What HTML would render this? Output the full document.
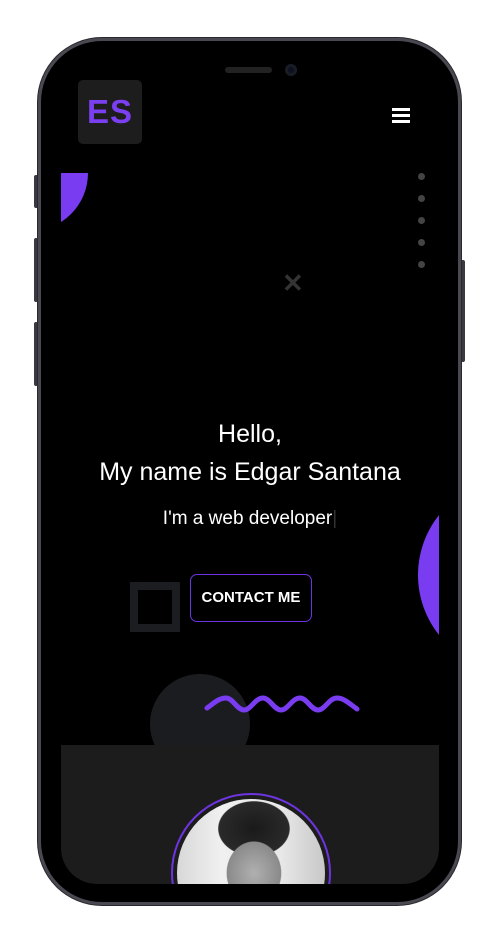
<!DOCTYPE html>
<html><head><meta charset="utf-8"><style>
*{margin:0;padding:0;box-sizing:border-box}
html,body{width:499px;height:944px;background:#fff;overflow:hidden;font-family:"Liberation Sans",sans-serif}
.abs{position:absolute}
.phone{left:38px;top:38px;width:423px;height:867px;border-radius:64px;background:#000;border:3px solid #4a4850;box-shadow:0 0 0 1px #2a282e}
.btn{background:#3a3840;border-radius:2px}
.screen{left:61px;top:58px;width:378px;height:826px;border-radius:36px;overflow:hidden;background:#000}
.t{color:#fff;text-align:center;width:100%;left:0}
</style></head><body>
<div class="abs btn" style="left:34px;top:175px;width:5px;height:33px"></div>
<div class="abs btn" style="left:34px;top:238px;width:5px;height:64px"></div>
<div class="abs btn" style="left:34px;top:322px;width:5px;height:64px"></div>
<div class="abs btn" style="left:460px;top:260px;width:5px;height:102px"></div>
<div class="abs phone"></div>
<div class="abs screen">
  <div class="abs" style="left:-89px;top:57px;width:116px;height:116px;border-radius:50%;background:#7a3cf0;clip-path:inset(58px 0 0 0)"></div>
  <div class="abs" style="left:0;top:687px;width:378px;height:139px;background:#1c1c1c"></div>
  <div class="abs" style="left:17px;top:22px;width:64px;height:64px;background:#1d1d1d;border-radius:5px;color:#7b3ff2;font-weight:bold;font-size:33px;text-align:center;line-height:64px;letter-spacing:1px">ES</div>
  <div class="abs" style="left:331px;top:50px;width:18px;height:3px;background:#fff;box-shadow:0 6px 0 #fff,0 12px 0 #fff"></div>
  <div class="abs" style="left:357px;top:115px;width:7px;height:7px;border-radius:50%;background:#444;box-shadow:0 22px 0 #444,0 44px 0 #444,0 66px 0 #444,0 88px 0 #444"></div>
  <div class="abs" style="left:221px;top:212px;color:#333;font-size:26px;font-weight:bold;line-height:1">✕</div>
  <div class="abs" style="left:357px;top:421px;width:192px;height:192px;border-radius:50%;background:#7a3cf0"></div>
  <div class="abs t" style="top:358px;font-size:25px;line-height:36px">Hello,</div>
  <div class="abs t" style="top:396px;font-size:25px;line-height:36px">My name is Edgar Santana</div>
  <div class="abs t" style="top:448px;font-size:19px;line-height:26px">I'm a web developer<span style="color:#333">|</span></div>
  <div class="abs" style="left:69px;top:524px;width:50px;height:50px;border:8px solid #1c1d20"></div>
  <div class="abs" style="left:129px;top:516px;width:122px;height:48px;border:1px solid #6d35e0;border-radius:7px;color:#fff;font-weight:bold;font-size:15px;text-align:center;line-height:46px">CONTACT ME</div>
  <div class="abs" style="left:89px;top:616px;width:100px;height:100px;border-radius:50%;background:#1b1c1f;clip-path:inset(0 0 29px 0)"></div>
  <svg class="abs" style="left:0;top:0" width="378" height="700"><path d="M146 650 C153 645 158 640 165 640 C172 640 176 652 183 652 C190 652 194 640 202 640 C209 640 213 652 220 652 C227 652 231 640 239 640 C246 640 250 652 257 652 C264 652 268 640 276 640 C283 640 289 646 296 651" fill="none" stroke="#7a3cf0" stroke-width="5" stroke-linecap="round"/></svg>
  <div class="abs" style="left:110px;top:735px;width:160px;height:160px;border-radius:50%;border:2px solid #6d35e0;padding:4px">
    <div style="width:100%;height:100%;border-radius:50%;background:radial-gradient(ellipse 26% 30% at 52% 50%,#b0b0b0 0,#8a8a8a 70%,transparent 72%),radial-gradient(ellipse 34% 26% at 52% 20%,#1a1a1a 0,#2a2a2a 70%,transparent 72%),linear-gradient(90deg,#d8d8d8,#f0f0f0 30%,#e8e8e8 70%,#c8c8c8)"></div>
  </div>
</div>
<div class="abs" style="left:225px;top:67px;width:47px;height:6px;border-radius:3px;background:#222"></div>
<div class="abs" style="left:285px;top:64px;width:12px;height:12px;border-radius:50%;background:#0c1020;box-shadow:inset 0 0 0 3px #1a1c25"></div>
</body></html>
